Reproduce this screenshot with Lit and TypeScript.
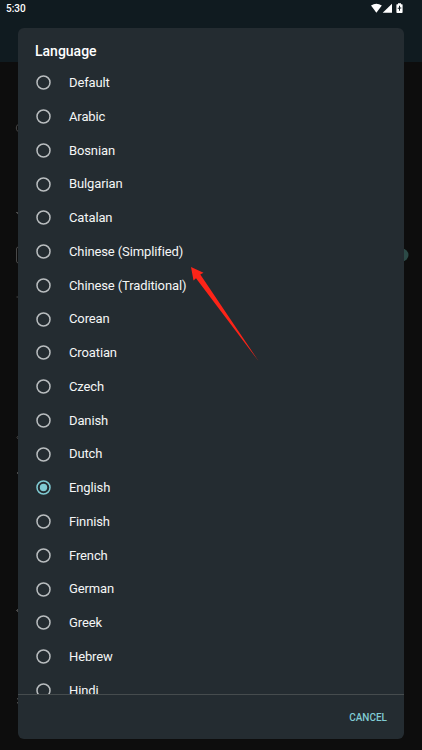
import { LitElement, html, css } from "lit";
import { customElement, property, state } from "lit/decorators.js";
import { classMap } from "lit/directives/class-map.js";

const LANGUAGES = [
  "Default", "Arabic", "Bosnian", "Bulgarian", "Catalan",
  "Chinese (Simplified)", "Chinese (Traditional)", "Corean", "Croatian",
  "Czech", "Danish", "Dutch", "English", "Finnish", "French", "German",
  "Greek", "Hebrew", "Hindi",
];

@customElement("status-bar")
class StatusBar extends LitElement {
  static styles = css`
    :host {
      display: flex;
      justify-content: space-between;
      height: 17px;
      padding: 0 18px 0 6px;
      color: #fff;
      font: 500 10px/18px Roboto, sans-serif;
    }
    svg { display: block; }
  `;
  render() {
    return html`
      <span>5:30</span>
      <svg width="34" height="17" viewBox="370 0 34 17" fill="#fff">
        <path d="M371 5.6Q376.3 1.9 381.8 5.6L376.4 12.7Z" />
        <path d="M392 3.7V12.8H382.7Z" />
        <path d="M398 3.200h3v1h1q.6 0 .6.6v7.400q0 .8-.8.8h-4.600q-.8 0-.8-.8V4.800q0-.6.6-.6h1z" />
        <path d="M399 5.800h1v1.700h1.300v1h-1.300v2.300h-1v-2h-1.300v-1h1.300z" fill="#101c21" />
      </svg>
    `;
  }
}

@customElement("language-option")
class LanguageOption extends LitElement {
  @property() label = "";
  @property({ type: Boolean }) checked = false;
  static styles = css`
    :host {
      display: flex;
      flex: none;
      align-items: center;
      gap: 18px;
      height: 33.75px;
      padding-left: 18px;
      color: #f4f6f6;
      font: 400 13px/16px Roboto, sans-serif;
      letter-spacing: -0.12px;
    }
    svg { display: block; flex: none; }
    span { padding-top: 0.6px; }
    .ring { fill: none; stroke: #b9bdbf; stroke-width: 1.5; }
    .dot { fill: none; }
    .on .ring { stroke: #80cbd3; }
    .on .dot { fill: #80cbd3; }
  `;
  render() {
    return html`
      <svg class=${classMap({ on: this.checked })} width="15" height="15" viewBox="0 0 15 15">
        <circle class="ring" cx="7.5" cy="7.5" r="6.500" />
        <circle class="dot" cx="7.5" cy="7.5" r="3.700" />
      </svg>
      <span>${this.label}</span>
    `;
  }
}

@customElement("app-root")
class AppRoot extends LitElement {
  @state() private selected = "English";
  static styles = css`
    :host {
      display: block;
      position: relative;
      box-sizing: border-box;
      height: 750px;
      overflow: hidden;
      background: linear-gradient(#101b20 62px, #0d0d0d 62px);
    }
    .behind { position: absolute; inset: 0; }
    .dialog {
      position: relative;
      display: flex;
      flex-direction: column;
      box-sizing: border-box;
      height: 711px;
      margin: 11px 18px 0;
      border-radius: 6px;
      background: #242c31;
      overflow: hidden;
      font-family: Roboto, sans-serif;
    }
    h1 {
      flex: none;
      height: 38px;
      margin: 0;
      padding: 14px 17px 0;
      box-sizing: border-box;
      color: #fff;
      font-size: 14px;
      font-weight: 500;
      line-height: 18px;
    }
    .list {
      flex: 1;
      min-height: 0;
      display: flex;
      flex-direction: column;
      overflow: hidden;
    }
    .actions {
      flex: none;
      display: flex;
      justify-content: flex-end;
      align-items: center;
      height: 45px;
      box-sizing: border-box;
      padding: 2px 17px 0 0;
      border-top: 1px solid #464c4e;
    }
    button {
      padding: 0;
      border: 0;
      background: none;
      color: #80cbd3;
      font: 500 10px/14px Roboto, sans-serif;
    }
    .arrow { position: absolute; left: 170px; top: 230px; }
  `;
  render() {
    return html`
      <svg class="behind" width="422" height="750" fill="none" stroke="#484848">
        <circle cx="21" cy="128" r="4.700" />
        <path d="M16 212.500h5M17 213l2 2M16.500 297h4M19 435l-2 2.500 2 2.500M17.500 472v2M16 610.500h4M17.500 609v3M17.500 698v1.500M17.500 702v1.500" />
        <rect x="16.500" y="247" width="12" height="16" rx="2" />
        <circle cx="402" cy="255" r="6.500" fill="#2c4a47" stroke="none" />
      </svg>
      <status-bar></status-bar>
      <div class="dialog">
        <h1>Language</h1>
        <div class="list">
          ${LANGUAGES.map((name) => html`
            <language-option
              label=${name}
              ?checked=${name === this.selected}
              @click=${() => (this.selected = name)}
            ></language-option>`)}
        </div>
        <div class="actions"><button>CANCEL</button></div>
      </div>
      <svg class="arrow" width="110" height="140" viewBox="170 230 110 140" fill="#fc2418">
        <path d="M191 267L203.500 272.800L200.300 274.500L258.500 361L196 278.300L193.500 280.500Z" />
      </svg>
    `;
  }
}
